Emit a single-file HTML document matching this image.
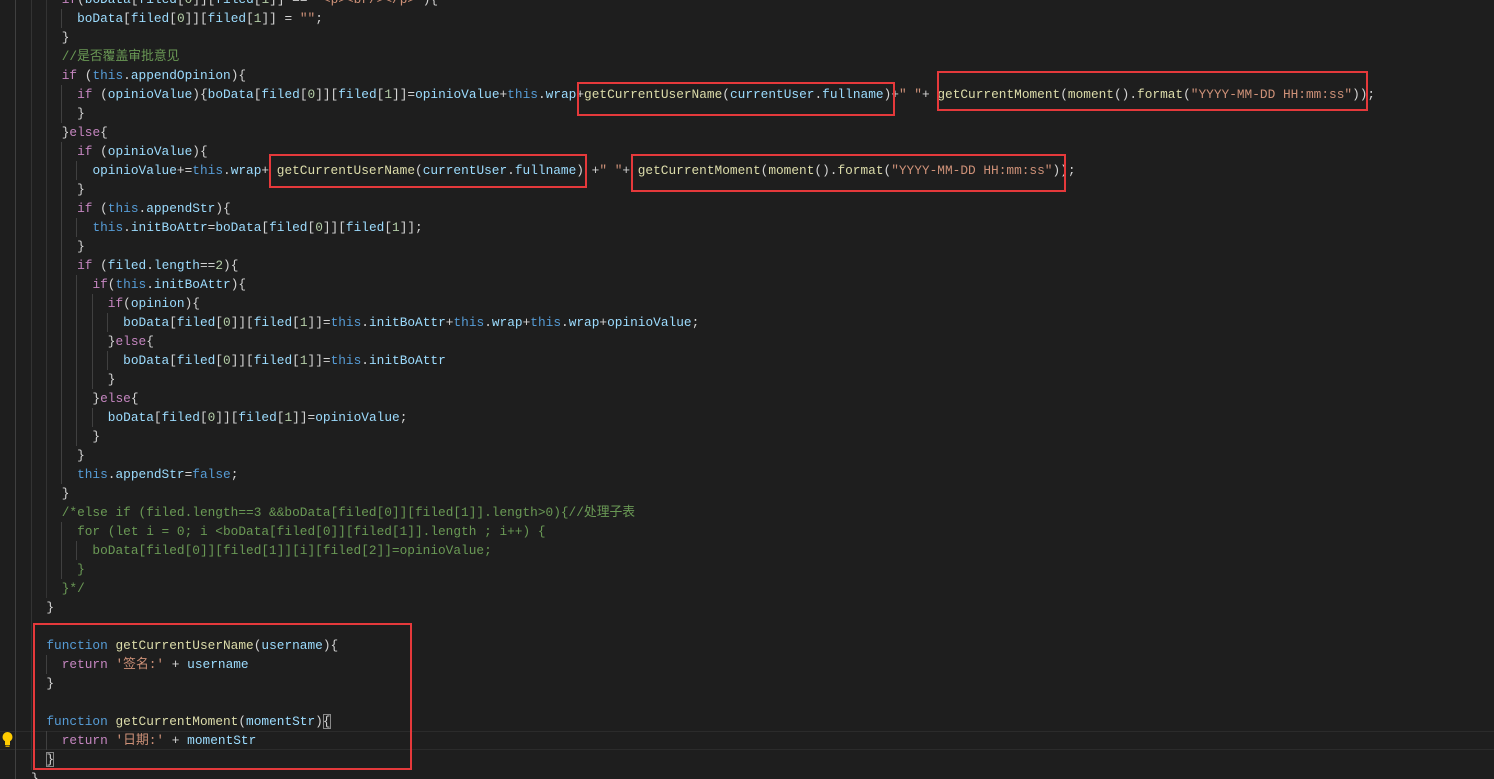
<!DOCTYPE html>
<html><head><meta charset="utf-8"><style>
html,body{margin:0;padding:0;background:#1e1e1e;width:1494px;height:779px;overflow:hidden;position:relative}
#code{position:absolute;left:0;top:-10px;width:1494px;font-family:"Liberation Mono","Noto Sans CJK SC",monospace;font-size:12.8px;color:#d4d4d4}
#code div{height:19px;line-height:19px;white-space:pre;padding-left:31px;position:relative}
.k{color:#c586c0}.b{color:#569cd6}.f{color:#dcdcaa}.v{color:#9cdcfe}.s{color:#ce9178}.c{color:#6a9955}.n{color:#b5cea8}
.g{position:absolute;width:1px;background:#404040}
.box{position:absolute;border:2px solid #e5393b;box-sizing:border-box}
.cur{position:absolute;left:0;width:1494px;height:1px;background:#2b2b2b}
</style></head><body>
<div class="cur" style="top:731px"></div><div class="cur" style="top:749px"></div>
<div class="g" style="left:15px;top:0;height:779px"></div>
<div class="g" style="left:31px;top:0;height:770px;background:#333"></div>
<div class="g" style="left:46px;top:0;height:598px;background:#333"></div>
<div class="g" style="left:61px;top:9px;height:19px"></div>
<div class="g" style="left:61px;top:85px;height:38px"></div>
<div class="g" style="left:61px;top:142px;height:342px"></div>
<div class="g" style="left:61px;top:522px;height:57px"></div>
<div class="g" style="left:76px;top:161px;height:19px"></div>
<div class="g" style="left:76px;top:218px;height:19px"></div>
<div class="g" style="left:76px;top:275px;height:171px"></div>
<div class="g" style="left:76px;top:541px;height:19px"></div>
<div class="g" style="left:92px;top:294px;height:95px"></div>
<div class="g" style="left:92px;top:408px;height:19px"></div>
<div class="g" style="left:107px;top:313px;height:19px"></div>
<div class="g" style="left:107px;top:351px;height:19px"></div>
<div class="g" style="left:46px;top:655px;height:19px"></div>
<div class="g" style="left:46px;top:731px;height:19px"></div>
<div id="code">
<div>    <span class="k">if</span>(<span class="v">boData</span>[<span class="v">filed</span>[<span class="n">0</span>]][<span class="v">filed</span>[<span class="n">1</span>]] == <span class="s">"&lt;p&gt;&lt;br/&gt;&lt;/p&gt;"</span>){</div>
<div>      <span class="v">boData</span>[<span class="v">filed</span>[<span class="n">0</span>]][<span class="v">filed</span>[<span class="n">1</span>]] = <span class="s">""</span>;</div>
<div>    }</div>
<div>    <span class="c">//是否覆盖审批意见</span></div>
<div>    <span class="k">if</span> (<span class="b">this</span>.<span class="v">appendOpinion</span>){</div>
<div>      <span class="k">if</span> (<span class="v">opinioValue</span>){<span class="v">boData</span>[<span class="v">filed</span>[<span class="n">0</span>]][<span class="v">filed</span>[<span class="n">1</span>]]=<span class="v">opinioValue</span>+<span class="b">this</span>.<span class="v">wrap</span>+<span class="f">getCurrentUserName</span>(<span class="v">currentUser</span>.<span class="v">fullname</span>)+<span class="s">" "</span>+ <span class="f">getCurrentMoment</span>(<span class="f">moment</span>().<span class="f">format</span>(<span class="s">"YYYY-MM-DD HH:mm:ss"</span>));</div>
<div>      }</div>
<div>    }<span class="k">else</span>{</div>
<div>      <span class="k">if</span> (<span class="v">opinioValue</span>){</div>
<div>        <span class="v">opinioValue</span>+=<span class="b">this</span>.<span class="v">wrap</span>+ <span class="f">getCurrentUserName</span>(<span class="v">currentUser</span>.<span class="v">fullname</span>) +<span class="s">" "</span>+ <span class="f">getCurrentMoment</span>(<span class="f">moment</span>().<span class="f">format</span>(<span class="s">"YYYY-MM-DD HH:mm:ss"</span>));</div>
<div>      }</div>
<div>      <span class="k">if</span> (<span class="b">this</span>.<span class="v">appendStr</span>){</div>
<div>        <span class="b">this</span>.<span class="v">initBoAttr</span>=<span class="v">boData</span>[<span class="v">filed</span>[<span class="n">0</span>]][<span class="v">filed</span>[<span class="n">1</span>]];</div>
<div>      }</div>
<div>      <span class="k">if</span> (<span class="v">filed</span>.<span class="v">length</span>==<span class="n">2</span>){</div>
<div>        <span class="k">if</span>(<span class="b">this</span>.<span class="v">initBoAttr</span>){</div>
<div>          <span class="k">if</span>(<span class="v">opinion</span>){</div>
<div>            <span class="v">boData</span>[<span class="v">filed</span>[<span class="n">0</span>]][<span class="v">filed</span>[<span class="n">1</span>]]=<span class="b">this</span>.<span class="v">initBoAttr</span>+<span class="b">this</span>.<span class="v">wrap</span>+<span class="b">this</span>.<span class="v">wrap</span>+<span class="v">opinioValue</span>;</div>
<div>          }<span class="k">else</span>{</div>
<div>            <span class="v">boData</span>[<span class="v">filed</span>[<span class="n">0</span>]][<span class="v">filed</span>[<span class="n">1</span>]]=<span class="b">this</span>.<span class="v">initBoAttr</span></div>
<div>          }</div>
<div>        }<span class="k">else</span>{</div>
<div>          <span class="v">boData</span>[<span class="v">filed</span>[<span class="n">0</span>]][<span class="v">filed</span>[<span class="n">1</span>]]=<span class="v">opinioValue</span>;</div>
<div>        }</div>
<div>      }</div>
<div>      <span class="b">this</span>.<span class="v">appendStr</span>=<span class="b">false</span>;</div>
<div>    }</div>
<div>    <span class="c">/*else if (filed.length==3 &amp;&amp;boData[filed[0]][filed[1]].length&gt;0){//处理子表</span></div>
<div><span class="c">      for (let i = 0; i &lt;boData[filed[0]][filed[1]].length ; i++) {</span></div>
<div><span class="c">        boData[filed[0]][filed[1]][i][filed[2]]=opinioValue;</span></div>
<div><span class="c">      }</span></div>
<div><span class="c">    }*/</span></div>
<div>  }</div>
<div> </div>
<div>  <span class="b">function</span> <span class="f">getCurrentUserName</span>(<span class="v">username</span>){</div>
<div>    <span class="k">return</span> <span class="s">'签名:'</span> + <span class="v">username</span></div>
<div>  }</div>
<div> </div>
<div>  <span class="b">function</span> <span class="f">getCurrentMoment</span>(<span class="v">momentStr</span>)<span style="outline:1px solid #888;outline-offset:-1px">{</span></div>
<div>    <span class="k">return</span> <span class="s">'日期:'</span> + <span class="v">momentStr</span></div>
<div>  <span style="outline:1px solid #888;outline-offset:-1px">}</span></div>
<div>}</div>
</div>
<div class="box" style="left:577px;top:82px;width:318px;height:34px"></div>
<div class="box" style="left:937px;top:71px;width:431px;height:40px"></div>
<div class="box" style="left:269px;top:154px;width:318px;height:34px"></div>
<div class="box" style="left:631px;top:154px;width:435px;height:38px"></div>
<div class="box" style="left:33px;top:623px;width:379px;height:147px"></div>
<svg style="position:absolute;left:1px;top:731px" width="13" height="17" viewBox="0 0 13 17"><circle cx="6.5" cy="6" r="5" fill="#ffcc00"/><rect x="4" y="10" width="5" height="4" fill="#ffcc00"/><rect x="4.5" y="14.5" width="4" height="1.5" fill="#c8a000"/></svg>
</body></html>
